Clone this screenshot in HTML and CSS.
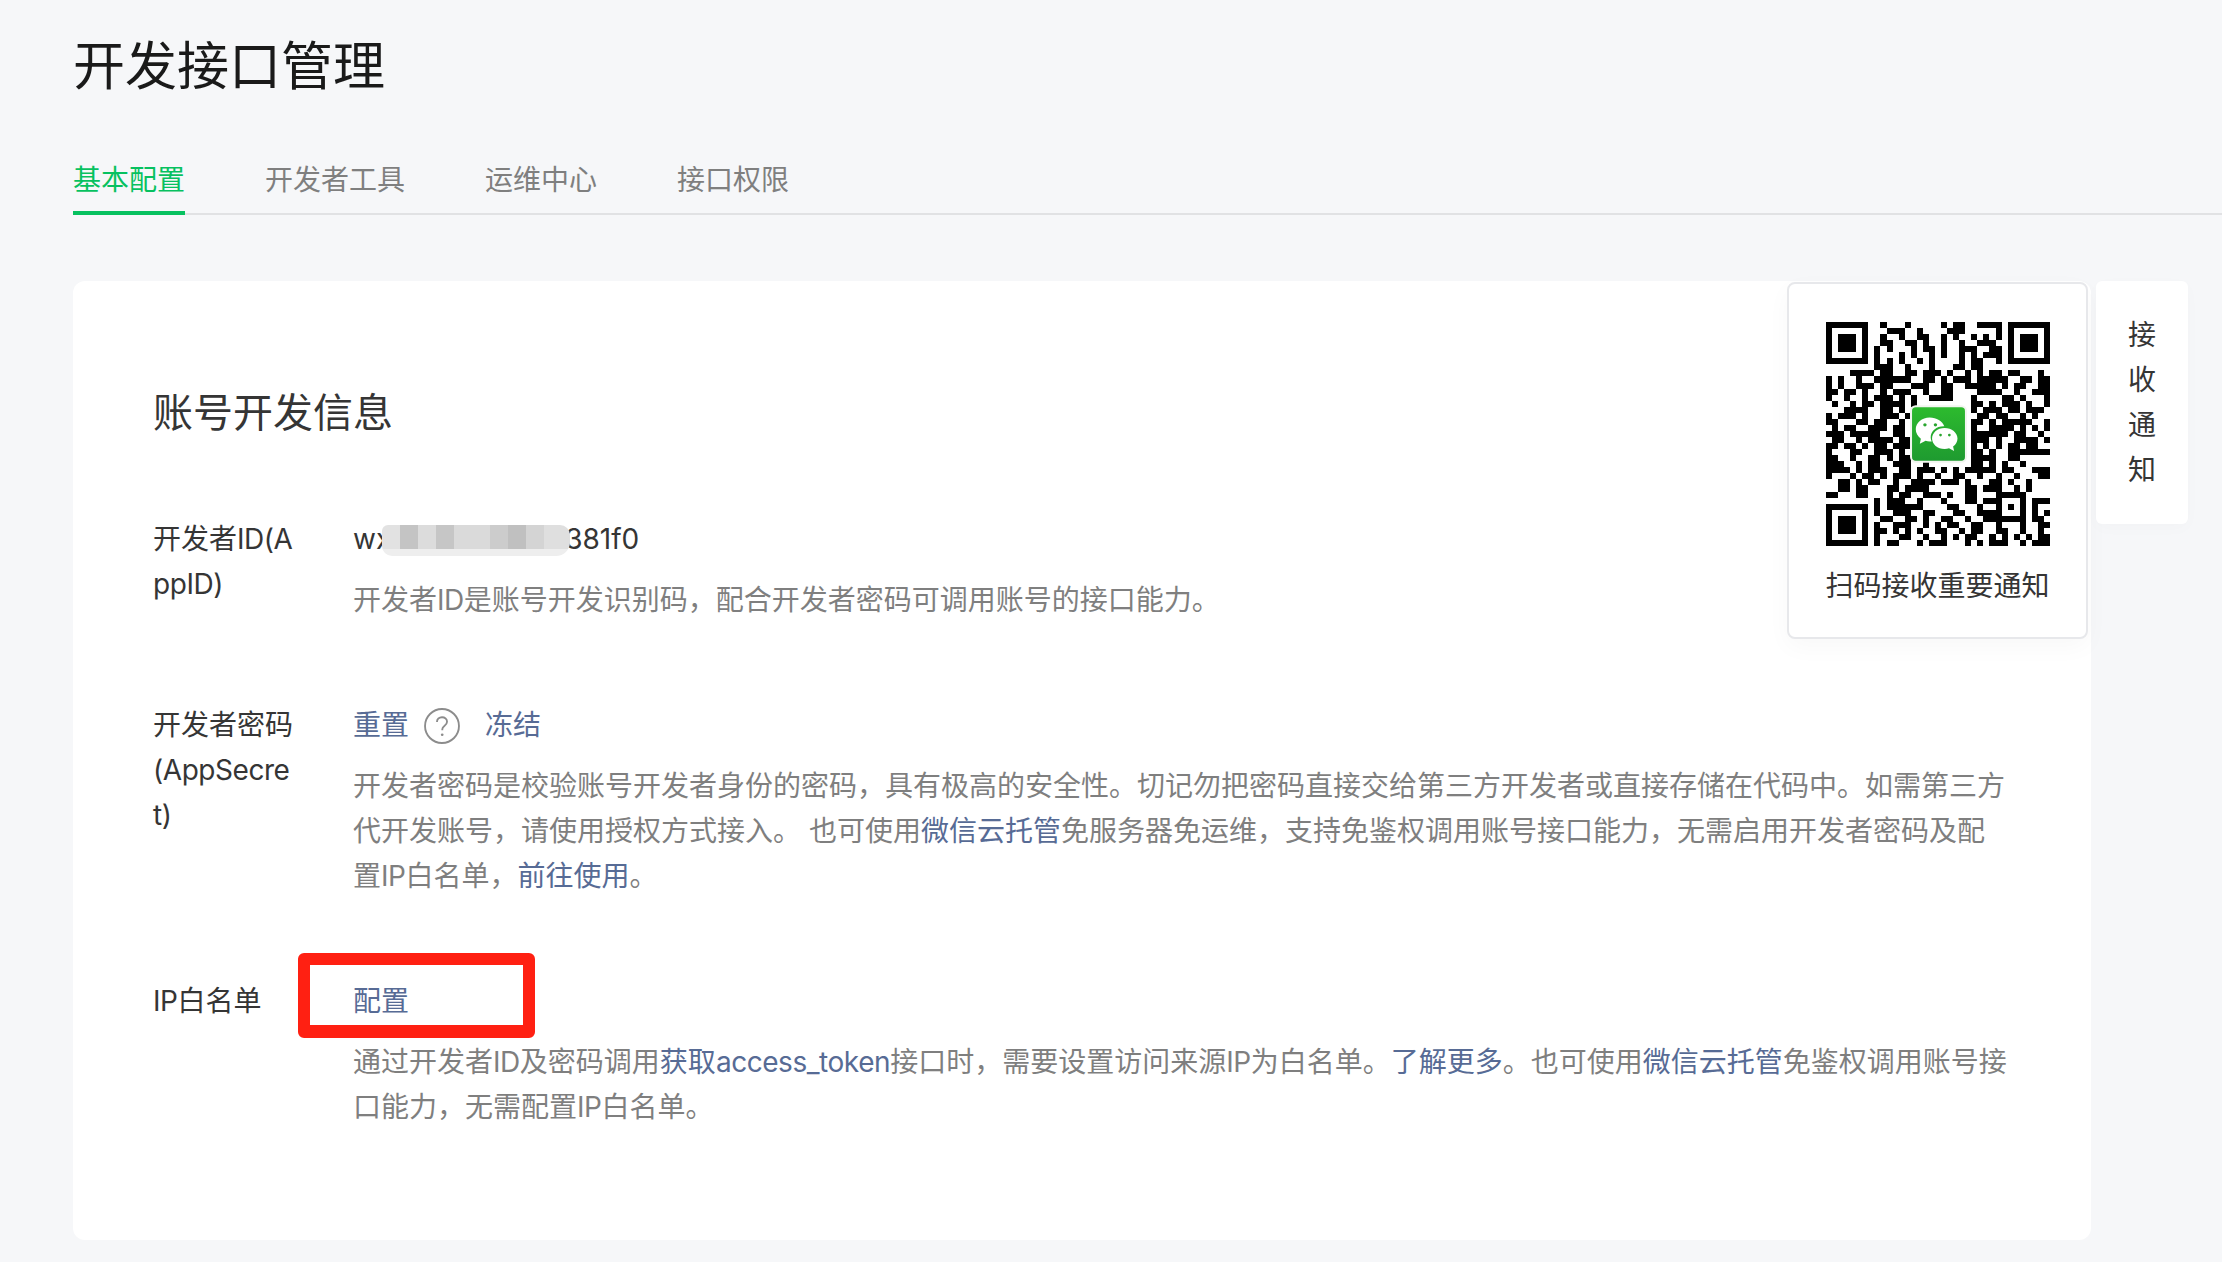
FILE: index.html
```html
<!DOCTYPE html>

<html lang="zh-CN">

<head>

    <meta charset="UTF-8">
    <meta name="viewport" content="width=device-width, initial-scale=1.0">

    <title>开发接口管理</title>

    <link rel="stylesheet" href="styles.css">

</head>

<body>

    <h1 class="page-title">开发接口管理</h1>

    <div class="tabs">
        <a class="tab tab-active">基本配置</a>
        <a class="tab">开发者工具</a>
        <a class="tab">运维中心</a>
        <a class="tab">接口权限</a>
    </div>

    <div class="card">

        <h2 class="card-title">账号开发信息</h2>

        <div class="row">
            <div class="row-label">开发者<span class="latin">ID(AppID)</span></div>
            <div class="row-value">
                <div class="value-line">
                    <span class="secret">wx<span class="mosaic"></span><span class="secret-tail">381f0</span></span>
                </div>
                <p class="desc">开发者<span class="latin">ID</span>是账号开发识别码，配合开发者密码可调用账号的接口能力。</p>
            </div>
        </div>

        <div class="row">
            <div class="row-label">开发者密码<span class="latin">(AppSecret)</span></div>
            <div class="row-value">
                <div class="value-line">
                    <a class="link">重置</a>
                    <svg class="help" viewBox="0 0 35 35">
                        <circle cx="17.5" cy="17.5" r="16.5" fill="none" stroke="#8c8c8c" stroke-width="1.8"/>
                        <path d="M12.6 13.6c0-2.8 2.2-4.6 4.9-4.6s4.9 1.8 4.9 4.4c0 2-1.2 3-2.6 4-1.3.9-2 1.6-2 3.3v1" fill="none" stroke="#8c8c8c" stroke-width="1.8"/>
                        <circle cx="17.7" cy="26" r="1.3" fill="#8c8c8c"/>
                    </svg>
                    <a class="link link-freeze">冻结</a>
                </div>
                <p class="desc">开发者密码是校验账号开发者身份的密码，具有极高的安全性。切记勿把密码直接交给第三方开发者或直接存储在代码中。如需第三方代开发账号，请使用授权方式接入。 也可使用<a class="link">微信云托管</a>免服务器免运维，支持免鉴权调用账号接口能力，无需启用开发者密码及配置<span class="latin">IP</span>白名单，<a class="link">前往使用</a>。</p>
            </div>
        </div>

        <div class="row">
            <div class="row-label"><span class="latin">IP</span>白名单</div>
            <div class="row-value">
                <div class="value-line">
                    <a class="link">配置</a>
                    <div class="red-box"></div>
                </div>
                <p class="desc">通过开发者<span class="latin">ID</span>及密码调用<a class="link">获取<span class="latin">access_token</span></a>接口时，需要设置访问来源<span class="latin">IP</span>为白名单。<a class="link">了解更多</a>。也可使用<a class="link">微信云托管</a>免鉴权调用账号接口能力，无需配置<span class="latin">IP</span>白名单。</p>
            </div>
        </div>

        <div class="qr-card">
            <div class="qr">
                <svg id="qr-code" class="qr-code" viewBox="0 0 37 37" shape-rendering="crispEdges"></svg>
                <svg class="qr-logo" viewBox="0 0 168 170">
                    <defs>
                        <linearGradient id="logo-green" x1="0" y1="0" x2="0" y2="1">
                            <stop offset="0" stop-color="#2dbb2e"/>
                            <stop offset="1" stop-color="#1e9a30"/>
                        </linearGradient>
                    </defs>
                    <rect x="3" y="3" width="162" height="164" rx="14" fill="url(#logo-green)" stroke="#f2f5f0" stroke-width="6"/>
                    <path d="M58 36c-23 0-41 15-41 35 0 11 6 21 15 28l-3 15 17-9c4 1 8 2 12 2h6c-2-4-3-8-3-12 0-19 17-33 38-33h2c-5-15-23-26-43-26z" fill="#fff"/>
                    <path d="M102 67c-21 0-37 14-37 31s16 31 37 31c5 0 9-1 13-2l15 8-3-13c8-6 13-15 13-24 0-17-17-31-38-31z" fill="#fff"/>
                    <circle cx="44" cy="58" r="5" fill="#2aa52f"/>
                    <circle cx="75" cy="58" r="5" fill="#2aa52f"/>
                    <circle cx="90" cy="88" r="4" fill="#2aa52f"/>
                    <circle cx="116" cy="88" r="4" fill="#2aa52f"/>
                </svg>
            </div>
            <div class="qr-text">扫码接收重要通知</div>
        </div>

        <div class="notice-tab">接收通知</div>

    </div>

    <script src="qr.js"></script>

</body>

</html>
```

FILE: styles.css
```css
* {
    box-sizing: border-box;
}

body {
    margin: 0;
    min-height: 1262px;
    background-color: #f6f7f9;
    font-family: Inter, "Noto Sans CJK SC", sans-serif;
    font-size: 28px;
    line-height: 45px;
    color: #353535;
}

.latin {
    letter-spacing: -0.45px;
}

.page-title {
    margin: 0;
    padding: 31px 0 0 73px;
    font-size: 52px;
    line-height: 72px;
    font-weight: 400;
    color: #1a1a1a;
}

.tabs {
    display: flex;
    gap: 80px;
    margin: 57px 0 0 73px;
    height: 55px;
    border-bottom: 2px solid #e1e2e4;
}

.tab {
    height: 55px;
    line-height: 40px;
    color: #7f7f7f;
}

.tab-active {
    color: #07c160;
    border-bottom: 4px solid #07c160;
}

.card {
    position: relative;
    width: 2018px;
    height: 959px;
    margin: 66px 0 0 73px;
    padding: 104px 40px 0 80px;
    background-color: #fff;
    border-radius: 12px;
}

.card-title {
    margin: 0 0 76px;
    font-size: 40px;
    line-height: 56px;
    font-weight: 400;
}

.row {
    display: flex;
    margin-bottom: 80px;
}

.row-label {
    width: 150px;
    margin-right: 50px;
    flex-shrink: 0;
    word-break: break-all;
}

.row-value {
    width: 1657px;
}

.value-line {
    position: relative;
    display: flex;
    align-items: center;
    height: 45px;
}

.desc {
    margin: 16px 0 0;
    color: #7f7f7f;
}

.link {
    color: #576b95;
}

.link-freeze {
    margin-left: 25px;
}

.help {
    width: 36px;
    height: 36px;
    margin-left: 15px;
}

.secret {
    position: relative;
}

.secret-tail {
    margin-left: 174px;
}

.mosaic {
    position: absolute;
    left: 29px;
    top: 8px;
    width: 188px;
    height: 31px;
    border-radius: 6px 10px 14px 10px;
    filter: blur(0.5px);
    background:
        linear-gradient(#fff0 0 24px, #eeeeee 24px),
        linear-gradient(90deg,
            #e2e2e2 0 18px, #c4c4c4 18px 36px, #dcdcdc 36px 54px, #c6c6c6 54px 72px,
            #dadada 72px 108px, #cccccc 108px 126px, #c0c0c0 126px 144px,
            #d4d4d4 144px 162px, #dfdfdf 162px);
}

.red-box {
    position: absolute;
    left: -55px;
    top: -26px;
    width: 237px;
    height: 85px;
    border: 12px solid #ff2012;
    border-bottom-width: 13px;
    border-radius: 6px;
}

.qr-card {
    position: absolute;
    top: 1px;
    left: 1714px;
    width: 301px;
    height: 357px;
    padding-top: 38px;
    background-color: #fff;
    border: 2px solid #e7e8eb;
    border-radius: 8px;
    box-shadow: 0 8px 24px rgba(0, 0, 0, 0.03);
    text-align: center;
}

.qr {
    position: relative;
    width: 224px;
    height: 224px;
    margin: 0 auto;
}

.qr-code {
    display: block;
    width: 224px;
    height: 224px;
}

.qr-logo {
    position: absolute;
    left: 84px;
    top: 83px;
    width: 57px;
    height: 58px;
}

.qr-text {
    margin-top: 18px;
    white-space: nowrap;
}

.notice-tab {
    position: absolute;
    top: 0;
    left: 2023px;
    width: 92px;
    height: 243px;
    padding: 32px 32px 0;
    background-color: #fff;
    border-radius: 6px;
    box-shadow: 0 4px 16px rgba(0, 0, 0, 0.02);
}
```

FILE: qr.js
```js
const qrRows = [
    "1111111001000100000101100111101111111",
    "1000001000111001000011100000101000001",
    "1011101001001001100101001010101011101",
    "1011101001100110100100100111001011101",
    "1011101010100010110100111001101011101",
    "1000001010001010010100101011101000001",
    "1111111010101001010000101100101111111",
    "0000000011100100010001101100000000000",
    "0000111101100110111010010101101100010",
    "1010010011111100110101110111110011011",
    "1010011101100011100110011111010110011",
    "1101101001011100100110000111100100111",
    "1001001011101010011110001000011010001",
    "0100101101111010000000001101011101001",
    "0001111001101000000000001011101101110",
    "1011101001110110000000000110110010100",
    "1100011011001010000000001101011111001",
    "0101100111011010000000001001111010101",
    "1110111110011010000000001111110110010",
    "0110010111101101000000001110100111101",
    "1101101011011100000000001010101101100",
    "1000110011101011000000001101001111111",
    "1100100110101100000000001111001100000",
    "1110010110011100100000001101010010000",
    "1111010111001101110101011111011000111",
    "1000101101011101001001100100100100011",
    "0011010110010011110111010001101001000",
    "0011011000110111100000011011100101000",
    "1100011000101100111010011000111110000",
    "0000000010111001000100011011100010111",
    "1111111010111111000011000100101010100",
    "1000001010011100110001100111100010101",
    "1011101001100110100110010011111110110",
    "1011101010011100101011001100100010011",
    "1011101011010101001100101100110010010",
    "1000001010001100100101011001010101011",
    "1111111010110001011100010101110010111"
];

// each black run of a row becomes one piece of the path
let d = "";
qrRows.forEach(function(row, y) {
    for (const run of row.matchAll(/1+/g)) {
        d += "M" + run.index + " " + y + "h" + run[0].length + "v1h-" + run[0].length + "z";
    }
});

const qrPath = document.createElementNS("http://www.w3.org/2000/svg", "path");
qrPath.setAttribute("d", d);
document.getElementById("qr-code").appendChild(qrPath);
```
